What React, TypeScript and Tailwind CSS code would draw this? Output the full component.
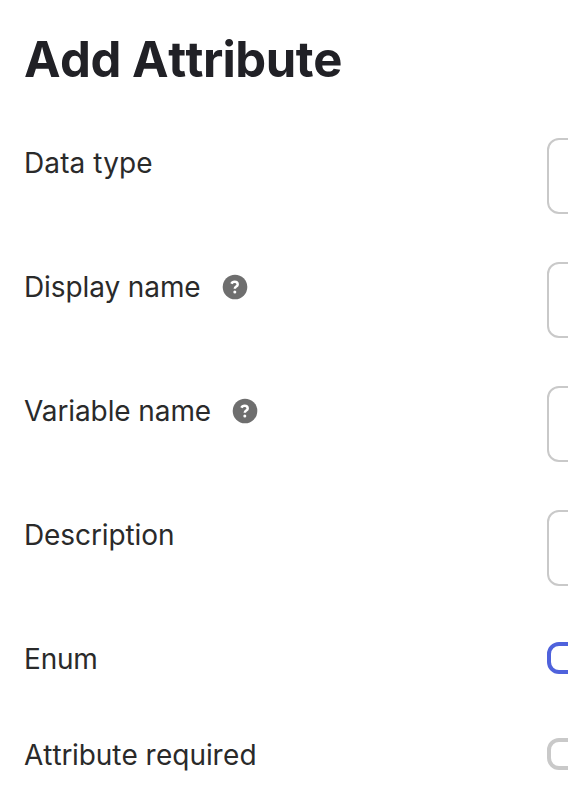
import type { ReactNode } from 'react';

const HelpIcon = () => (
  <svg viewBox="0 0 26 26" className="h-[26px] w-[26px] shrink-0">
    <circle cx="13" cy="13" r="12.3" fill="#6e6e6e" />
    <path
      d="M9.5 9.8c.5-1.3 1.6-2 3.1-2 1.9 0 3.1 1 3.1 2.6 0 2.2-2.9 2.1-2.9 4.3"
      fill="none"
      stroke="#fff"
      strokeWidth="2.5"
    />
    <circle cx="12.8" cy="18" r="1.5" fill="#fff" />
  </svg>
);

type FieldRowProps = {
  label: string;
  labelClassName?: string;
  help?: boolean;
  className: string;
  children: ReactNode;
};

const FieldRow = ({ label, labelClassName = '', help, className, children }: FieldRowProps) => (
  <div className={`flex items-start ${className}`}>
    <div className="flex h-[50px] w-[523px] shrink-0 items-center gap-[21px]">
      <span className={`whitespace-nowrap text-[28px] leading-[50px] ${labelClassName}`}>{label}</span>
      {help && <HelpIcon />}
    </div>
    {children}
  </div>
);

const TextBox = () => (
  <div className="h-[76px] w-[600px] shrink-0 rounded-[12px] border-2 border-[#c9c9c9]" />
);

export default function App() {
  return (
    <main className="h-[806px] w-[568px] overflow-hidden bg-white pl-6 pt-[30px] font-['Inter',sans-serif] text-[#2a2a2a]">
      <h1 className="h-[108px] text-[49px] font-bold leading-[60px] tracking-[-0.48px] text-[#212126] [font-kerning:none]">
        Add Attribute
      </h1>
      <FieldRow label="Data type" labelClassName="tracking-[0.1px]" className="h-[124px]">
        <TextBox />
      </FieldRow>
      <FieldRow label="Display name" labelClassName="tracking-[-0.1px]" help className="h-[124px]">
        <TextBox />
      </FieldRow>
      <FieldRow label="Variable name" labelClassName="tracking-[-0.1px]" help className="h-[124px]">
        <TextBox />
      </FieldRow>
      <FieldRow label="Description" labelClassName="tracking-[-0.1px]" className="h-[124px]">
        <TextBox />
      </FieldRow>
      <FieldRow label="Enum" labelClassName="tracking-[-0.2px]" className="h-[96px]">
        <div className="mt-2 h-8 w-8 shrink-0 rounded-[12px] border-4 border-[#4f62dc]" />
      </FieldRow>
      <FieldRow label="Attribute required" labelClassName="tracking-[-0.05px] [font-kerning:none]" className="h-[72px]">
        <div className="mt-2 h-8 w-8 shrink-0 rounded-[12px] border-4 border-[#c9c9c9]" />
      </FieldRow>
    </main>
  );
}
